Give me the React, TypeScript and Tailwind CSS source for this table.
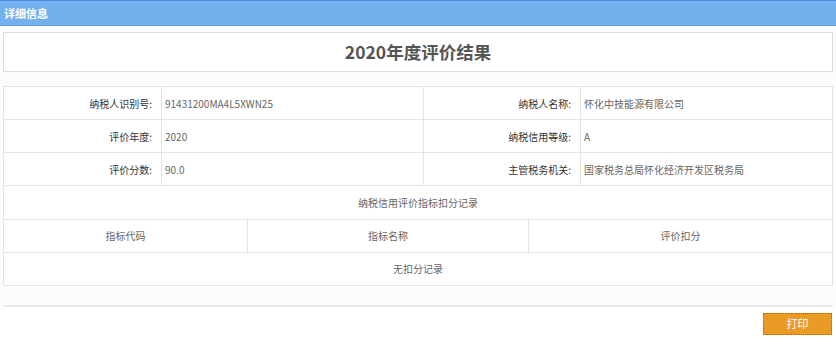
import React from 'react'

const font = { fontFamily: '"Noto Sans CJK SC", "Noto Sans", sans-serif' }

const rows = [
  ['纳税人识别号:', '91431200MA4L5XWN25', '纳税人名称:', '怀化中技能源有限公司'],
  ['评价年度:', '2020', '纳税信用等级:', 'A'],
  ['评价分数:', '90.0', '主管税务机关:', '国家税务总局怀化经济开发区税务局'],
]

export default function App() {
  return (
    <div className="w-[836px] h-[344px] bg-[#fbfdfd] overflow-hidden text-[10px]" style={font}>
      {/* 标题栏 */}
      <div className="h-[26px] bg-[#74b0ee] border-t border-[#4a8fdc] border-b border-b-[#62a2e6] flex items-center px-1">
        <span className="text-white font-bold text-[11px]">详细信息</span>
      </div>

      <div className="px-[3px]">
        <div className="mt-[6px] h-[40px] bg-white border border-[#dddddd] flex items-center justify-center">
          <h1 className="text-[17.5px] font-bold text-[#555]">2020年度评价结果</h1>
        </div>

        <table className="mt-[14px] w-[830px] border-collapse table-fixed bg-white">
          <colgroup>
            <col className="w-[158px]" />
            <col className="w-[262px]" />
            <col className="w-[157px]" />
            <col />
          </colgroup>
          <tbody>
            {rows.map((r, i) => (
              <tr key={i} className="h-[33px]">
                <td className="border border-[#e3e3e3] text-right pr-[9px] text-[#333]">{r[0]}</td>
                <td className="border border-[#e3e3e3] pl-[3px] text-[#666]">{r[1]}</td>
                <td className="border border-[#e3e3e3] text-right pr-[9px] text-[#333]">{r[2]}</td>
                <td className="border border-[#e3e3e3] pl-[3px] text-[#666]">{r[3]}</td>
              </tr>
            ))}
          </tbody>
        </table>

        <table className="w-[830px] border-collapse table-fixed bg-white">
          <colgroup>
            <col className="w-[244px]" />
            <col className="w-[281px]" />
            <col />
          </colgroup>
          <tbody>
            <tr className="h-[33px]">
              <td colSpan={3} className="border border-[#e3e3e3] border-t-0 text-center text-[#666]">纳税信用评价指标扣分记录</td>
            </tr>
            <tr className="h-[33px]">
              <td className="border border-[#e3e3e3] text-center text-[#666]">指标代码</td>
              <td className="border border-[#e3e3e3] text-center text-[#666]">指标名称</td>
              <td className="border border-[#e3e3e3] text-center text-[#666]">评价扣分</td>
            </tr>
            <tr className="h-[33px]">
              <td colSpan={3} className="border border-[#e3e3e3] text-center text-[#666]">无扣分记录</td>
            </tr>
          </tbody>
        </table>

        <div className="mt-[19px] h-[2px] bg-[#e8e8e8]" />
      </div>

      <div className="bg-white h-full flex justify-end pr-[4px] pt-[6px]">
        <button className="w-[69px] h-[22px] bg-[#ec9a26] text-white text-[11px] outline outline-1 outline-dotted outline-[#8a6a40] -outline-offset-1">
          打印
        </button>
      </div>
    </div>
  )
}
